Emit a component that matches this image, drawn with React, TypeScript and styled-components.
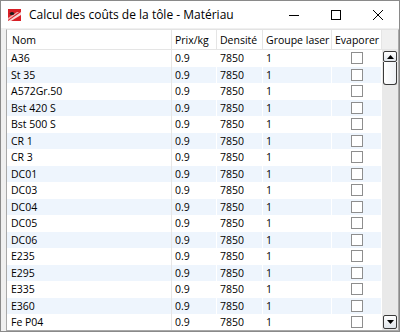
import React from "react";
import styled, { createGlobalStyle } from "styled-components";

const Global = createGlobalStyle`
  html, body { margin: 0; padding: 0; background: #ffffff; }
  * { box-sizing: border-box; }
`;

const Window = styled.div`
  width: 400px;
  height: 332px;
  border: 1px solid #8a8a8a;
  display: flex;
  flex-direction: column;
  background: #f0f0f0;
  font-family: "Open Sans", "Noto Sans", sans-serif;
  overflow: hidden;
`;

const TitleBar = styled.div`
  height: 27px;
  flex: none;
  background: #ffffff;
  display: flex;
  align-items: center;
  padding-left: 7px;
`;

const TitleText = styled.span`
  margin-left: 8px;
  font-size: 12px;
  color: #000;
  flex: 1;
  white-space: nowrap;
`;

const CaptionButton = styled.div`
  width: 42px;
  height: 27px;
  display: flex;
  align-items: center;
  justify-content: center;
`;

const Client = styled.div`
  flex: 1;
  padding: 1px 0 0 5px;
  display: flex;
  min-height: 0;
`;

const Grid = styled.div`
  flex: 1;
  border: 1px solid #a9a9a9;
  border-top-color: #e3e3e3;
  background: #ffffff;
  display: flex;
  flex-direction: column;
  min-height: 0;
  overflow: hidden;
`;

const cols = "165px 45px 46px 69px 50px";

const HeaderRow = styled.div`
  display: grid;
  grid-template-columns: ${cols} 1fr;
  height: 20px;
  flex: none;
  border-bottom: 1px solid #e5e5e5;
`;

const HeadCell = styled.div<{ $first?: boolean; $filler?: boolean }>`
  display: flex;
  align-items: center;
  padding-left: ${(p) => (p.$first ? 5 : 3)}px;
  font-size: 10.5px;
  color: #000;
  white-space: nowrap;
  background: ${(p) => (p.$filler ? "#f0f0f0" : "#ffffff")};
  border-right: ${(p) => (p.$filler ? "none" : "1px solid #e5e5e5")};
`;

const Body = styled.div`
  flex: 1;
  display: flex;
  min-height: 0;
`;

const Rows = styled.div`
  width: 375px;
  flex: none;
  overflow: hidden;
`;

const Row = styled.div<{ $alt: boolean }>`
  display: grid;
  grid-template-columns: ${cols};
  height: 16.5px;
  background: ${(p) => (p.$alt ? "#eef5fd" : "#ffffff")};
`;

const Cell = styled.div<{ $first?: boolean; $center?: boolean }>`
  display: flex;
  align-items: center;
  justify-content: ${(p) => (p.$center ? "center" : "flex-start")};
  padding-left: ${(p) => (p.$first ? 4 : p.$center ? 0 : 3)}px;
  font-size: 10.5px;
  color: #000;
  white-space: nowrap;
  border-right: 1px solid ${(p) => (p.$first ? "#e6e6e6" : "#ffffff")};
`;

const Check = styled.div`
  width: 12px;
  height: 12px;
  border: 1px solid #8e8e8e;
  background: #ffffff;
`;

const ScrollTrack = styled.div`
  flex: 1;
  background: #e9e9e9;
  display: flex;
  flex-direction: column;
  padding: 1px 1px 1px 1px;
`;

const ScrollButton = styled.div<{ $h: number }>`
  height: ${(p) => p.$h}px;
  flex: none;
  border: 1px solid #3a3a3a;
  border-radius: 2px;
  background: linear-gradient(#ffffff, #dfe4ea);
  display: flex;
  align-items: center;
  justify-content: center;
`;

const Thumb = styled.div`
  height: 23px;
  flex: none;
  border: 1px solid #3a3a3a;
  border-top: none;
  border-radius: 0 0 3px 3px;
  background: linear-gradient(90deg, #ffffff, #eef1f5);
`;

const Spacer = styled.div`
  flex: 1;
`;

const AppIcon = () => (
  <svg width="13" height="12" viewBox="0 0 13 12">
    <rect x="0" y="0" width="13" height="12" fill="#d81f26" />
    <path d="M0 12 L13 3 L13 6 L3 12 Z" fill="#f6d6d6" />
    <path d="M0 9 L9 3 L11 3 L0 11 Z" fill="#f3b0b0" />
    <ellipse cx="4" cy="4.5" rx="2.2" ry="1.6" fill="#1a1a1a" />
  </svg>
);

const data = [
  "A36",
  "St 35",
  "A572Gr.50",
  "Bst 420 S",
  "Bst 500 S",
  "CR 1",
  "CR 3",
  "DC01",
  "DC03",
  "DC04",
  "DC05",
  "DC06",
  "E235",
  "E295",
  "E335",
  "E360",
  "Fe P04",
];

export default function App() {
  return (
    <>
      <Global />
      <Window>
        <TitleBar>
          <AppIcon />
          <TitleText>Calcul des coûts de la tôle - Matériau</TitleText>
          <CaptionButton>
            <svg width="10" height="10" viewBox="0 0 10 10">
              <line x1="0" y1="5.5" x2="10" y2="5.5" stroke="#000" strokeWidth="1" />
            </svg>
          </CaptionButton>
          <CaptionButton>
            <svg width="10" height="10" viewBox="0 0 10 10">
              <rect x="0.5" y="0.5" width="9" height="9" fill="none" stroke="#000" strokeWidth="1" />
            </svg>
          </CaptionButton>
          <CaptionButton>
            <svg width="10" height="10" viewBox="0 0 10 10">
              <path d="M0 0 L10 10 M10 0 L0 10" stroke="#000" strokeWidth="1" />
            </svg>
          </CaptionButton>
        </TitleBar>
        <Client>
          <Grid>
            <HeaderRow>
              <HeadCell $first>Nom</HeadCell>
              <HeadCell>Prix/kg</HeadCell>
              <HeadCell>Densité</HeadCell>
              <HeadCell>Groupe laser</HeadCell>
              <HeadCell>Evaporer</HeadCell>
              <HeadCell $filler />
            </HeaderRow>
            <Body>
              <Rows>
                {data.map((name, i) => (
                  <Row key={name} $alt={i % 2 === 1}>
                    <Cell $first>{name}</Cell>
                    <Cell>0.9</Cell>
                    <Cell>7850</Cell>
                    <Cell>1</Cell>
                    <Cell $center>
                      <Check />
                    </Cell>
                  </Row>
                ))}
              </Rows>
              <ScrollTrack>
                <ScrollButton $h={11}>
                  <svg width="7" height="4" viewBox="0 0 7 4">
                    <path d="M0 4 L3.5 0 L7 4 Z" fill="#000" />
                  </svg>
                </ScrollButton>
                <Thumb />
                <Spacer />
                <ScrollButton $h={14}>
                  <svg width="7" height="4" viewBox="0 0 7 4">
                    <path d="M0 0 L3.5 4 L7 0 Z" fill="#000" />
                  </svg>
                </ScrollButton>
              </ScrollTrack>
            </Body>
          </Grid>
        </Client>
      </Window>
    </>
  );
}
